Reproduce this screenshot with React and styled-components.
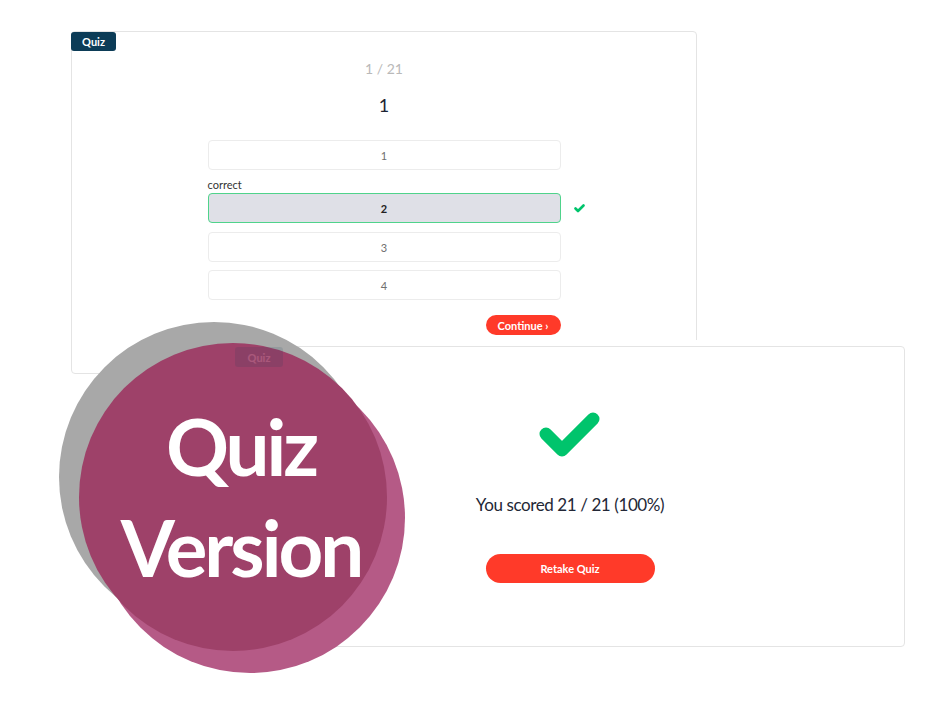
import React from "react";
import styled, { createGlobalStyle } from "styled-components";

const GlobalStyle = createGlobalStyle`
  html, body {
    margin: 0;
    padding: 0;
    background: #ffffff;
    font-family: "Lato", "Noto Sans", sans-serif;
  }
`;

const Page = styled.div`
  width: 949px;
  height: 705px;
  box-sizing: border-box;
  padding: 31px 0 0 71px;
  overflow: hidden;
`;

const Stage = styled.div`
  position: relative;
  display: flex;
  flex-direction: column;
  align-items: flex-start;
`;

const Card = styled.div`
  position: relative;
  box-sizing: border-box;
  width: ${(p) => p.w}px;
  height: ${(p) => p.h}px;
  margin-top: ${(p) => p.mt || 0}px;
  margin-left: ${(p) => p.ml || 0}px;
  background: #ffffff;
  border: 1px solid #e4e4e4;
  border-radius: 4px;
  box-shadow: ${(p) => (p.front ? "0 -6px 0 0 #ffffff" : "none")};
  display: flex;
  flex-direction: column;
  align-items: center;
`;

const Badge = styled.div`
  position: absolute;
  top: 0;
  left: -1px;
  z-index: ${(p) => (p.faded ? 10 : 1)};
  opacity: ${(p) => (p.faded ? 0.12 : 1)};
  width: ${(p) => p.w}px;
  height: ${(p) => p.h}px;
  background: #0c3c57;
  color: #ffffff;
  border-radius: 3px;
  font-size: 11px;
  font-weight: 700;
  display: flex;
  align-items: center;
  justify-content: center;
`;

const Counter = styled.div`
  margin-top: 28px;
  font-size: 14px;
  color: #b9b9b9;
  line-height: 18px;
`;

const Question = styled.div`
  margin-top: 16px;
  font-size: 18px;
  color: #1d2333;
  line-height: 22px;
`;

const Options = styled.div`
  margin-top: 24px;
  width: 353px;
  display: flex;
  flex-direction: column;
`;

const OptionRow = styled.div`
  position: relative;
  margin-top: ${(p) => p.mt}px;
`;

const Option = styled.div`
  box-sizing: border-box;
  height: 30px;
  border: 1px solid ${(p) => (p.correct ? "#4fd38b" : "#ececec")};
  background: ${(p) => (p.correct ? "#dfe0e7" : "#ffffff")};
  border-radius: 4px;
  display: flex;
  align-items: center;
  justify-content: center;
  font-size: 11px;
  color: ${(p) => (p.correct ? "#222222" : "#6f6f6f")};
  font-weight: ${(p) => (p.correct ? 700 : 400)};
`;

const Label = styled.div`
  margin-top: 9px;
  margin-bottom: 2px;
  font-size: 11px;
  color: #333333;
  line-height: 12px;
`;

const SmallCheck = styled.svg`
  position: absolute;
  left: 366px;
  top: 11px;
`;

const Actions = styled.div`
  width: 353px;
  margin-top: 15px;
  display: flex;
  justify-content: flex-end;
`;

const RedButton = styled.button`
  box-sizing: border-box;
  width: ${(p) => p.w}px;
  height: ${(p) => p.h}px;
  border: none;
  border-radius: 15px;
  background: #ff3a29;
  color: #ffffff;
  font-family: "Lato", sans-serif;
  font-size: 11px;
  font-weight: 700;
  padding: 0;
  display: flex;
  align-items: center;
  justify-content: center;
`;

const BigCheck = styled.svg`
  margin-top: 65px;
  margin-right: 2px;
`;

const Score = styled.div`
  margin-top: 35px;
  font-size: 17px;
  letter-spacing: -0.4px;
  color: #232736;
  line-height: 20px;
`;

const RetakeWrap = styled.div`
  margin-top: 39px;
`;

const Sticker = styled.div`
  position: absolute;
  left: -12px;
  top: 291px;
  width: 346px;
  height: 351px;
  z-index: 5;
`;

const Disc = styled.div`
  position: absolute;
  left: ${(p) => p.x}px;
  top: ${(p) => p.y}px;
  width: ${(p) => p.d}px;
  height: ${(p) => p.d}px;
  border-radius: 50%;
  background: ${(p) => p.bg};
`;

const DiscText = styled.div`
  position: absolute;
  left: 20px;
  top: 21px;
  width: 308px;
  height: 308px;
  box-sizing: border-box;
  padding: 53px 0 0 16px;
  display: flex;
  flex-direction: column;
  align-items: center;
  color: #ffffff;
  font-family: "Lato", sans-serif;
  font-weight: 700;
  font-size: 78px;
  line-height: 101px;
  letter-spacing: -3px;
`;

const options = ["1", "2", "3", "4"];
const gaps = [0, 0, 9, 8];

export default function App() {
  return (
    <Page>
      <GlobalStyle />
      <Stage>
        <Card w={626} h={343}>
          <Badge w={45} h={19}>Quiz</Badge>
          <Counter>1 / 21</Counter>
          <Question>1</Question>
          <Options>
            {options.map((o, i) => (
              <React.Fragment key={o}>
                {o === "2" && <Label>correct</Label>}
                <OptionRow mt={gaps[i]}>
                  <Option correct={o === "2"}>{o}</Option>
                  {o === "2" && (
                    <SmallCheck width="11" height="9" viewBox="0 0 11 9">
                      <polyline
                        points="1.5,4.5 4,7 9.5,1.5"
                        fill="none"
                        stroke="#00c46c"
                        strokeWidth="2.6"
                        strokeLinecap="round"
                        strokeLinejoin="round"
                      />
                    </SmallCheck>
                  )}
                </OptionRow>
              </React.Fragment>
            ))}
          </Options>
          <Actions>
            <RedButton w={75} h={20}>Continue ›</RedButton>
          </Actions>
        </Card>

        <Card w={670} h={301} mt={-28} ml={164} front>
          <Badge w={48} h={20} faded>Quiz</Badge>
          <BigCheck width="63" height="48" viewBox="0 0 63 48">
            <polyline
              points="8,22 24,38 55,7"
              fill="none"
              stroke="#00c46c"
              strokeWidth="13"
              strokeLinecap="round"
              strokeLinejoin="round"
            />
          </BigCheck>
          <Score>You scored 21 / 21 (100%)</Score>
          <RetakeWrap>
            <RedButton w={169} h={29}>Retake Quiz</RedButton>
          </RetakeWrap>
        </Card>

        <Sticker>
          <Disc x={0} y={0} d={310} bg="#a8a8a8" />
          <Disc x={36} y={41} d={310} bg="#b55a86" />
          <Disc x={20} y={21} d={308} bg="#9e4169" />
          <DiscText>
            <span>Quiz</span>
            <span>Version</span>
          </DiscText>
        </Sticker>
      </Stage>
    </Page>
  );
}
